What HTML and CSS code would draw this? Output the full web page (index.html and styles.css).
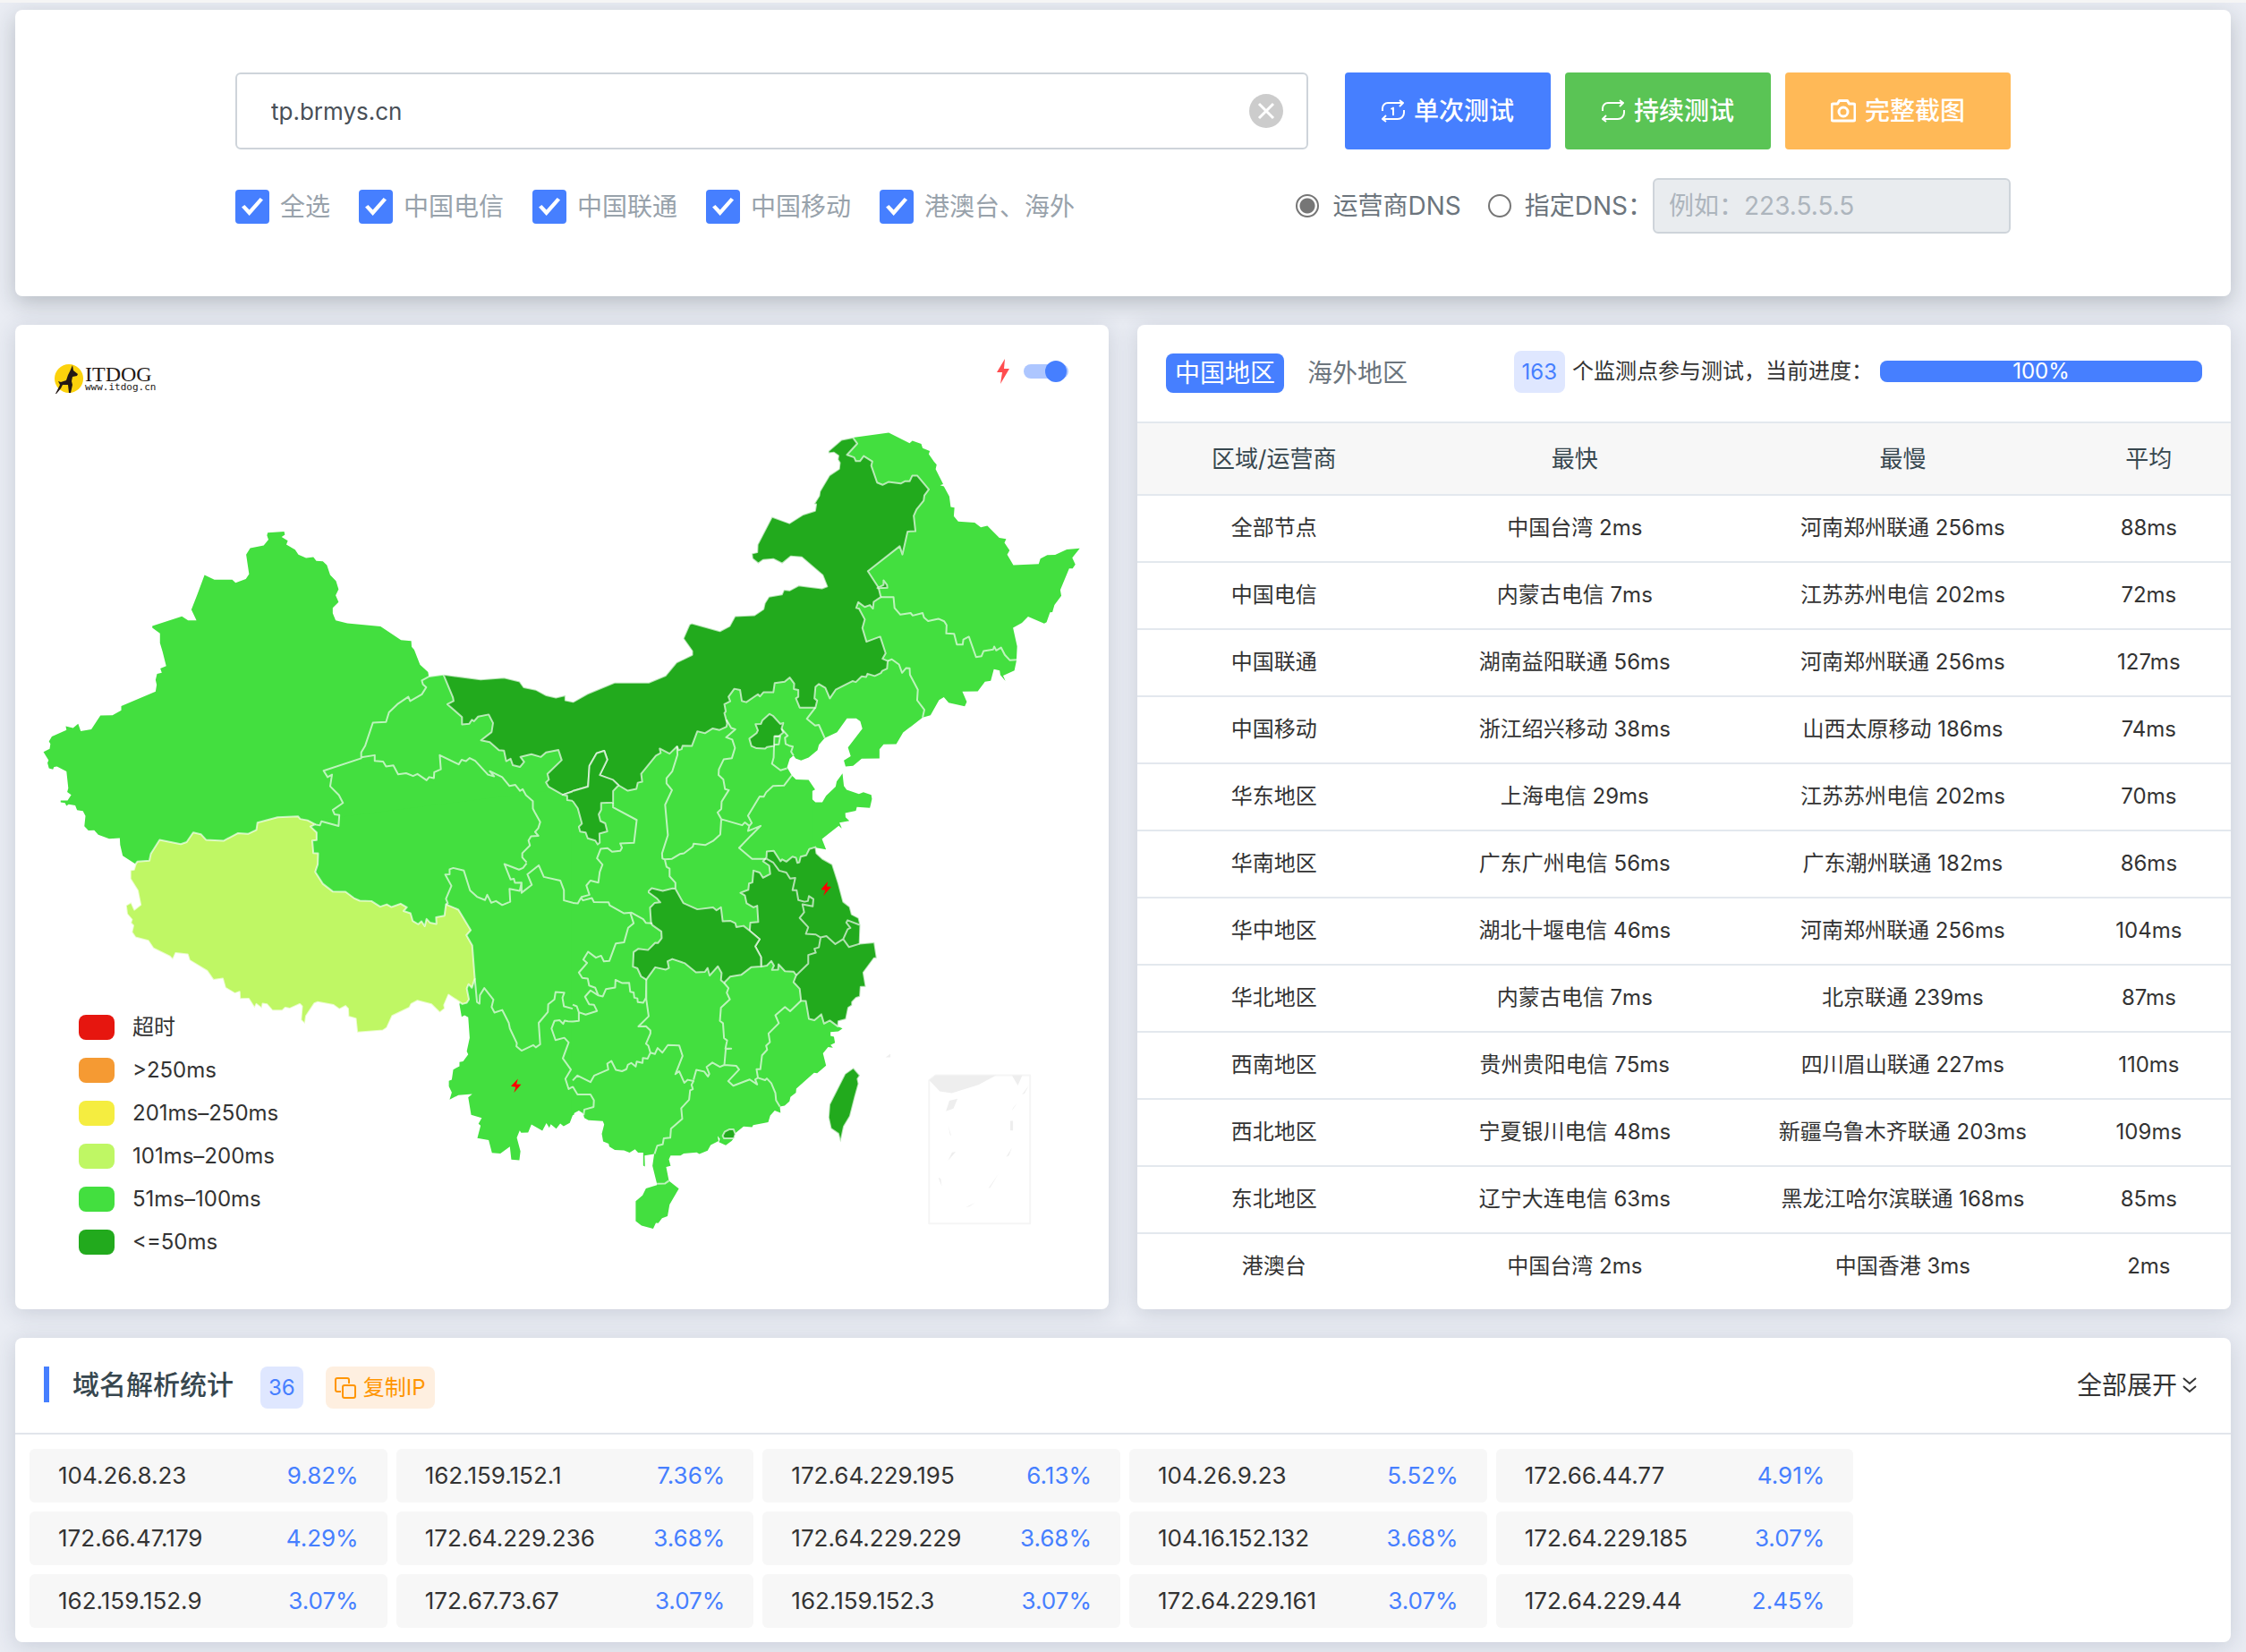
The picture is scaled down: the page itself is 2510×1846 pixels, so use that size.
FILE: index.html
```html
<!DOCTYPE html>
<html lang="zh-CN">
<head>
<meta charset="utf-8">
<title>ITDOG</title>
<meta name="viewport" content="width=device-width, initial-scale=1">
<link rel="stylesheet" href="styles.css">
</head>
<body>
<main class="page">

<form class="card search">
  <div class="search-inner">
    <div class="search-row">
      <div class="host-box">
        <input class="host" type="text" value="tp.brmys.cn" aria-label="域名">
        <button class="clear" type="button" aria-label="清空"><svg viewBox="0 0 38 38" aria-hidden="true"><circle cx="19" cy="19" r="19"/><path d="M11 11l16 16M27 11L11 27"/></svg></button>
      </div>
      <div class="actions">
        <button class="btn btn-blue" type="button"><svg class="ico" viewBox="0 0 26 26" aria-hidden="true"><path d="M1 13v-3a6 6 0 0 1 6-6h17M20 1l4 3-4 4M25 12v3a7 7 0 0 1-7 7H2M5 18l-4 4 4 3M10.500 11l2.500-1.500v8.500"/></svg>单次测试</button>
        <button class="btn btn-green" type="button"><svg class="ico" viewBox="0 0 26 26" aria-hidden="true"><path d="M1 13v-3a6 6 0 0 1 6-6h17M20 1l4 3-4 4M25 12v3a7 7 0 0 1-7 7H2M5 18l-4 4 4 3"/></svg>持续测试</button>
        <button class="btn btn-orange" type="button"><svg class="ico ico-cam" viewBox="0 0 28 26" aria-hidden="true"><path d="M3 5h4.500l2-3.500h9l2 3.500H25a2 2 0 0 1 2 2v15a2 2 0 0 1-2 2H3a2 2 0 0 1-2-2V7a2 2 0 0 1 2-2z"/><circle cx="14" cy="14" r="5"/></svg>完整截图</button>
      </div>
    </div>
    <div class="filter-row">
      <div class="checks">
        <label class="check"><input type="checkbox" checked>全选</label>
        <label class="check"><input type="checkbox" checked>中国电信</label>
        <label class="check"><input type="checkbox" checked>中国联通</label>
        <label class="check"><input type="checkbox" checked>中国移动</label>
        <label class="check"><input type="checkbox" checked>港澳台、海外</label>
      </div>
      <div class="dns">
        <label class="radio"><input type="radio" name="dns" checked>运营商DNS</label>
        <label class="radio"><input type="radio" name="dns">指定DNS：</label>
        <input class="dns-input" type="text" placeholder="例如：223.5.5.5" aria-label="指定DNS" disabled>
      </div>
    </div>
  </div>
</form>

<div class="columns">
  <section class="card map-card">
    <svg class="map" viewBox="17 363 1222 1100" role="img" aria-label="中国地区延迟地图">
      <!-- land base -->
      <g class="g51">
        <g transform="translate(0 350) scale(.408163 .395408)">
          <path d="M733,620 778,617 780,626 771,632 788,643 784,654 808,668 817,682 838,692 858,689 866,700 884,701 895,712 904,740 920,757 927,780 919,797 927,816 911,833 911,848 919,868 951,876 1042,885 1098,924 1126,926 1127,943 1134,951 1150,993 1172,1014 1174,1027 1214,1021 1300,1100 1450,1100 1570,1200 1570,1570 372,1557 336,1533 329,1502 328,1483 299,1485 269,1474 258,1461 242,1462 231,1450 234,1421 227,1407 211,1404 206,1391 188,1388 182,1392 178,1384 166,1382 166,1377 185,1377 195,1361 184,1353 187,1342 182,1295 156,1281 148,1282 145,1289 134,1286 130,1271 133,1263 119,1240 136,1231 138,1217 134,1210 142,1196 182,1178 180,1167 200,1172 214,1160 221,1181 250,1176 275,1137 308,1136 332,1122 332,1110 426,1069 429,1050 426,1036 430,1019 443,1016 439,1004 455,997 445,956 438,932 438,905 417,889 417,884 498,857 515,868 538,868 524,838 541,793 560,740 587,753 636,753 645,762 673,751 682,737 674,682 685,664 722,656 735,640 731,628z"/>
        </g>
        <g transform="translate(640 440) scale(.382653 .357143)">
          <path d="M818,137 923,122 984,155 992,147 1018,157 1022,170 1043,179 1040,189 1055,212 1063,222 1060,236 1082,283 1073,286 1084,290 1100,321 1104,354 1115,356 1113,383 1126,400 1174,403 1192,418 1211,413 1246,451 1266,454 1261,466 1276,490 1269,503 1287,536 1361,533 1366,516 1386,505 1409,504 1443,487 1481,484 1459,513 1468,534 1460,547 1450,547 1424,614 1427,632 1407,661 1401,683 1394,684 1384,715 1377,719 1330,697 1312,717 1286,732 1298,790 1296,835 1290,866 1257,882 1264,899 1249,880 1247,866 1230,862 1221,898 1204,901 1183,931 1138,932 1151,964 1145,978 1098,967 1084,949 1070,958 1045,1006 1022,1013 965,1060 945,1096 908,1097 896,1112 896,1141 844,1142 819,1164 797,1166 792,1147 812,1134 804,1107 846,1048 840,1025 828,1016 801,1016 772,1059 736,1077 719,1098 715,1115 689,1138 667,1147 651,1141 645,1132 634,1142 626,1169 640,1194 652,1207 689,1208 708,1238 693,1247 693,1262 709,1278 729,1278 740,1258 768,1229 771,1213 788,1188 792,1227 800,1239 836,1252 849,1247 872,1255 874,1268 868,1296 830,1293 827,1305 796,1312 797,1325 808,1336 779,1342 786,1360 777,1352 728,1393 740,1426 710,1420 700,1450 700,1568 -4,1568 -4,1200 300,1050 430,900 700,800 850,500 800,230 795,170z"/>
        </g>
        <g transform="translate(0 880) scale(.408163 .369898)">
          <path d="M850,100 1572,0 1572,988 1568,990 1560,1013 1543,1023 1534,1015 1523,1031 1508,1017 1504,1028 1496,1014 1485,1037 1455,1018 1446,1042 1427,1043 1423,1036 1415,1058 1425,1099 1422,1126 1400,1124 1396,1085 1370,1106 1347,1104 1338,1065 1307,1059 1316,1021 1310,1016 1319,998 1290,989 1282,936 1293,926 1255,929 1231,943 1237,921 1229,903 1229,886 1237,883 1241,852 1258,842 1258,829 1268,827 1282,806 1278,797 1286,756 1282,694 1272,688 1264,693 1258,655 1262,632 1240,600 850,400z"/>
        </g>
        <g transform="translate(640 880) scale(.382653 .369898)">
          <path d="M-4,0 700,0 700,400 800,520 760,600 750,702 775,722 788,728 776,737 753,739 753,750 763,753 766,771 753,778 760,786 746,784 731,803 740,840 714,863 705,862 653,910 652,922 636,935 633,948 619,961 605,964 607,983 590,976 577,991 571,1011 527,1020 524,1026 499,1024 470,1048 472,1058 464,1068 447,1081 427,1071 430,1062 423,1052 426,1068 403,1080 394,1097 370,1107 362,1102 324,1106 315,1112 286,1112 281,1123 286,1143 273,1146 281,1188 310,1212 283,1260 277,1295 261,1301 250,1316 243,1315 235,1333 201,1323 184,1310 184,1250 204,1232 214,1211 246,1201 246,1197 233,1143 238,1107 210,1112 211,1145 206,1142 206,1103 191,1103 182,1093 166,1103 150,1096 123,1095 107,1085 105,1076 89,1069 85,1046 92,1018 88,1008 46,1005 34,998 30,984 18,976 0,986 -4,988z"/>
        </g>
      </g>
      <!-- provinces in the other latency bands -->
      <g class="bordered">
        <g transform="translate(0 880) scale(.408163 .369898)">
          <path class="g101" d="M372,230 376,224 409,221 413,200 437,158 495,171 511,165 529,136 550,141 564,158 612,161 651,138 679,140 702,128 705,106 760,90 816,87 822,95 842,99 863,111 850,118 867,136 867,159 855,160 858,198 871,199 870,232 863,255 884,291 911,314 946,315 969,334 985,342 1017,343 1041,360 1059,353 1072,361 1097,351 1114,362 1105,373 1124,380 1130,403 1145,413 1154,404 1163,419 1168,397 1177,408 1195,412 1194,392 1217,387 1221,353 1255,369 1289,431 1277,446 1293,477 1300,577 1292,605 1283,594 1278,607 1284,640 1278,650 1266,654 1258,648 1228,626 1216,657 1218,668 1204,680 1181,655 1143,644 1126,654 1121,665 1074,690 1059,726 1048,734 978,740 974,698 954,692 953,668 946,660 929,670 913,657 870,648 861,652 838,690 835,714 824,702 827,661 821,654 793,668 781,665 773,674 746,674 731,655 719,653 717,667 702,654 697,666 681,638 657,639 656,617 643,622 617,605 610,577 584,581 567,554 519,522 514,504 481,500 473,520 465,510 420,486 406,463 371,453 361,437 365,417 358,409 361,399 348,382 345,356 359,347 368,369 385,354 377,311 357,276 357,250 367,248z"/>
        </g>
        <g class="g50" transform="translate(0 350) scale(.408163 .395408)">
          <path d="M1569,1098 1548,1094 1548,1080 1522,1086 1496,1080 1467,1064 1434,1057 1423,1041 1380,1030 1316,1035 1214,1021 1240,1085 1242,1096 1225,1105 1265,1141 1265,1162 1285,1160 1292,1149 1298,1153 1309,1140 1338,1134 1350,1158 1346,1184 1317,1207 1341,1212 1366,1235 1380,1236 1386,1266 1398,1259 1404,1277 1424,1282 1435,1268 1425,1254 1455,1246 1481,1254 1495,1241 1529,1234 1538,1263 1499,1302 1503,1318 1495,1326 1502,1338 1541,1361 1569,1351"/>
          <path d="M1569,1351 1541,1361 1553,1364 1553,1376 1569,1378"/>
        </g>
        <g class="g50" transform="translate(640 440) scale(.382653 .357143)">
          <path d="M0,965 43,939 122,904 222,904 271,882 303,841 349,817 349,805 323,766 341,722 348,718 430,743 458,727 474,696 531,693 557,674 561,655 573,635 611,628 617,613 634,615 660,600 690,604 728,609 743,603 730,568 669,512 637,509 612,531 586,517 556,520 542,531 525,516 523,500 539,496 540,472 582,385 633,405 673,378 708,366 711,346 705,345 720,319 722,305 750,255 778,235 780,216 774,206 776,194 763,184 747,186 747,179 785,144 818,137 831,156 801,191 822,199 827,211 839,211 850,195 875,212 872,225 889,278 905,285 922,276 958,281 970,274 984,274 992,256 1006,256 1040,299 1027,318 1025,334 1004,362 996,382 1001,430 978,431 963,503 955,477 862,555 893,606 900,636 879,651 877,672 868,661 853,667 834,652 828,670 836,672 853,706 846,733 858,776 898,760 914,812 905,829 920,836 918,860 904,867 900,874 882,883 861,876 857,886 844,884 827,902 817,899 768,926 751,953 738,920 719,908 709,917 706,953 714,960 709,982 663,982 652,953 659,948 659,927 646,924 647,907 634,888 619,901 590,905 586,934 557,934 547,947 541,940 507,965 494,961 489,927 472,923 455,948 460,962 443,971 447,994 443,999 451,1032 449,1042 429,1052 409,1047 386,1062 364,1056 348,1102 321,1101 318,1112 309,1115 305,1103 283,1126 254,1110 257,1124 243,1132 200,1189 203,1214 190,1217 186,1236 161,1242 134,1225 118,1210 79,1193 101,1145 92,1117 70,1125 49,1164 45,1229 0,1243"/>
          <path d="M0,1243 45,1229 49,1164 70,1125 92,1117 101,1145 79,1193 118,1208 134,1225 118,1243 118,1279 83,1280 83,1302 76,1316 81,1337 95,1344 101,1369 78,1376 79,1404 73,1410 66,1398 44,1391 38,1373 22,1370 18,1355 27,1345 15,1297 0,1274"/>
          <path d="M516,1079 537,1062 541,1053 534,1034 550,1033 554,1022 575,1002 585,1008 606,1033 615,1030 610,1048 615,1060 602,1072 589,1072 588,1102 568,1105 562,1110 537,1109 522,1102z"/>
          <path d="M890,608 908,598 908,584 918,598 919,607z"/>
        </g>
        <g class="g50" transform="translate(640 880) scale(.382653 .369898)">
          <path d="M567,193 587,191 607,223 612,217 624,224 642,209 652,212 656,228 662,226 666,209 682,205 691,186 709,180 712,199 729,215 758,232 776,290 790,345 809,360 815,383 835,394 840,415 838,472 881,468 888,516 880,516 849,559 856,602 841,602 839,632 828,635 816,648 816,658 805,665 798,700 776,706 775,722 751,704 734,713 726,685 706,703 690,699 681,645 667,644 663,608 645,588 653,567 645,556 620,555 601,534 600,550 582,551 588,538 580,524 567,538 551,541 550,512 533,480 546,458 517,433 519,408 542,406 539,357 528,362 508,350 503,326 490,318 513,309 515,290 525,287 528,251 546,257 556,273 577,261 574,236 556,223 566,212z"/>
          <path d="M222,313 231,304 263,312 292,305 300,306 323,349 364,368 410,362 420,371 433,362 438,404 461,403 475,410 478,422 499,418 516,432 546,458 533,480 550,512 550,541 521,543 492,566 460,571 442,590 433,582 435,560 424,540 400,568 394,545 386,557 360,558 328,531 291,518 277,525 281,545 272,550 241,543 215,580 200,571 189,546 176,541 178,497 192,487 220,491 241,469 249,470 260,455 259,435 233,416 229,410 226,363 239,349 256,347 247,336 222,317z"/>
          <path d="M438,1052 444,1040 457,1033 470,1033 475,1047 471,1060 442,1060z"/>
          <path d="M820,847 839,870 832,880 835,895 824,936 810,993 792,1024 782,1072 776,1046 754,1030 747,997 750,957 795,865z"/>
        </g>
      </g>
      <!-- province borders -->
      <g class="borders">
        <path transform="translate(0 350) scale(.408163 .395408)" d="M1214,1021 1174,1027 1155,1038 1158,1049 1167,1057 1155,1077 1123,1096 1118,1084 1088,1105 1065,1128 1057,1155 1021,1157 1000,1222 989,1241 989,1258 886,1293 897,1311 909,1304 904,1337 928,1362 939,1384 911,1404 916,1416 929,1418 927,1449 880,1436 876,1447 863,1445M989,1255 1026,1249 1026,1265 1049,1267 1057,1281 1077,1278 1090,1303 1112,1300 1131,1308 1143,1302 1168,1320 1175,1311 1188,1314 1189,1297 1207,1289 1204,1249 1256,1275 1264,1262 1276,1266 1286,1257 1301,1265 1336,1304 1353,1309 1341,1294 1375,1311 1395,1336 1411,1333 1424,1350 1431,1345 1440,1362 1459,1379 1459,1400 1464,1410 1479,1438 1474,1455 1465,1466 1474,1477 1454,1478 1447,1490 1451,1504 1430,1526 1430,1538 1442,1552"/>
        <path transform="translate(0 880) scale(.408163 .369898)" d="M1442,229 1432,243 1421,248 1381,231 1398,278 1407,276 1410,288 1428,287 1423,312 1395,306 1397,345 1375,355 1358,343 1345,348 1334,324 1328,340 1306,330 1287,311 1270,251 1241,243 1231,247 1231,262 1219,263 1236,297 1221,336 1226,350 1221,353M1428,287 1428,318 1456,294 1444,262 1475,235 1489,270 1534,281 1544,310 1544,341 1568,348M1300,577 1306,648 1313,653 1314,627 1326,606 1351,641 1346,663 1354,680 1375,672 1393,711 1396,728 1415,772 1414,782 1428,795 1460,778 1467,785 1479,776 1475,711 1500,678 1501,655 1518,640 1521,618 1545,620 1540,635 1544,661 1568,668M1568,707 1555,706 1546,704 1542,714 1532,703 1518,705 1510,728 1521,763 1545,756 1557,770 1541,818 1563,852 1548,880 1557,911 1568,904"/>
        <path transform="translate(640 440) scale(.382653 .357143)" d="M305,1103 306,1130 291,1181 274,1203 274,1219 290,1240 270,1286 278,1381 261,1438 262,1454 269,1457 274,1480 283,1486 283,1510 300,1530 300,1548M269,1457 290,1455 313,1440 325,1438 351,1417 353,1408 387,1412 410,1399 431,1379 434,1331 423,1310 434,1299 435,1276 456,1240 445,1237 440,1207 426,1193 427,1175 441,1144 465,1140 474,1108 466,1082 448,1075 475,1050 463,1046 449,1020M434,1331 495,1350 503,1341 516,1352 523,1343 512,1320 546,1260 558,1261 565,1247 585,1227 617,1226 640,1194M516,1352 512,1368 549,1352 520,1383 486,1421 524,1455 565,1455M588,1102 587,1138 582,1158 607,1178 626,1172M610,1048 628,1070 620,1076 622,1096 632,1101 643,1104 638,1120 645,1132M589,1072 606,1072 602,1097 588,1098M709,982 684,1017 708,1038 719,1036 736,1077M920,836 932,831 953,847 962,873 974,858 984,859 985,879 1008,926 1006,959 1027,989 1022,1013M900,636 937,636 940,670 957,691 987,686 993,694 1022,686 1026,700 1038,711 1068,704 1085,712 1092,724 1091,750 1114,751 1122,785 1139,785 1141,769 1157,760 1178,824 1194,821 1200,805 1228,800 1231,791 1237,803 1251,794 1262,817 1277,834 1297,832"/>
        <path transform="translate(640 880) scale(.382653 .369898)" d="M0,349 15,350 24,333 30,341 56,334 62,346 105,347 108,356 150,380 172,378 206,398 214,409 233,410M24,331 49,324 40,296 52,281 75,287 79,255 87,233 71,214 82,185 102,183 115,194 139,191 144,182 139,169 179,167 187,98 118,60 118,46M168,378 178,410 162,424 150,468 126,471 107,524 91,525 83,508 68,514 45,496 31,520 42,530 18,559 28,575 44,577 48,598 66,605 75,628 88,631 97,609 124,604 125,581 145,591 165,590 168,617 178,619 180,635 189,637 190,648 206,650 214,635 215,580M75,628 52,613 36,632 48,655 62,656 71,675 38,686 18,679 18,705 0,707M18,679 12,661 0,656M0,885 14,870 52,890 63,870 104,852 101,834 113,826 126,853 144,857 157,851 161,838 171,832 184,843 187,828 204,832 205,817 219,819 227,801 240,805 248,787 262,801 278,778 311,779 321,811 300,866 311,857 326,892 336,883 353,887 347,898 351,911 343,915 340,943 317,969 320,1001 287,1031 285,1058 266,1060 263,1078 247,1082 239,1107M0,903 14,927 52,927 62,945 61,965 34,973 32,990M246,1197 270,1196 281,1188M215,580 215,640 222,691 192,722 214,721 227,734 227,743 214,774 221,780 227,801M442,590 455,606 450,620 459,640 433,665 430,705 439,712 442,757 451,764 446,789 463,789 447,790 443,838M353,883 361,853 384,858 395,873 399,865 391,844 408,831 430,844 443,838 478,841 486,852 454,887 469,901 517,882 539,897 533,882 541,877M667,644 635,676 620,663 592,688 602,712 572,743 576,769 565,780 568,792 553,809 548,851 537,851 541,877 562,884 567,879 580,893 592,923 594,945 605,964M566,215 586,227 603,251 624,257 635,275 650,273 642,310 654,310 659,340 677,345 687,343 690,328 703,337 701,359 671,353 676,377 663,394 688,422 681,442 710,444 724,453 719,483 706,487 710,499 688,506 688,532 653,567M724,453 741,449 767,473 790,458M838,415 803,401 799,408 811,424 803,428 790,458 807,482 838,472"/>
      </g>
      <!-- South China Sea inset -->
      <g class="inset" transform="translate(640 880) scale(.382653 .369898)">
        <path class="inset-frame" d="M1041,885 1060,869H1336V1317H1041z"/>
        <path d="M1041,884 1060,870H1236L1185,898 1107,923 1072,918zM1283,870H1313L1300,900zM1100,946 1124,940 1112,970 1090,978zM1332,900 1320,924 1312,928zM1299,952 1282,977 1286,968zM1278,1007H1286V1036H1278zM1097,1022 1106,1054 1102,1048zM1119,1100 1096,1127 1108,1102zM1283,1088 1274,1112 1266,1116zM1068,1178 1075,1182 1078,1205zM1243,1168 1220,1208 1214,1211zM1176,1254 1158,1266 1148,1268zM928,804V815H914z"/>
      </g>
      <g class="bolt">
        <path transform="translate(640 880) scale(.382653 .369898)" d="M745,284 725,308 738,310 732,327 755,300 742,299z"/>
        <path transform="translate(0 880) scale(.408163 .369898)" d="M1418,880 1399,902 1412,905 1407,922 1427,897 1414,896z"/>
      </g>
    </svg>
    <div class="map-overlay">
      <header class="map-head">
        <a class="logo" href="#">
          <svg class="dog" viewBox="0 0 34 36" aria-hidden="true"><circle cx="17" cy="17" r="16"/><path d="M19 7l2-5 1 6 5 4-1 2-5 1-1 5 1 4-2 9h-2l-1-9-6 0-2 4-5 6H2l5-10-2-4 3 1 6-2 2-6z"/></svg>
          <span class="logo-text"><b>ITDOG</b><small>www.itdog.cn</small></span>
        </a>
        <label class="bolt-switch">
          <svg viewBox="0 0 14 28" aria-hidden="true"><path d="M9 0L0 15h6L4 28 14 11H8z"/></svg>
          <input type="checkbox" role="switch" aria-label="闪电标记" checked>
        </label>
      </header>
      <ul class="legend">
        <li><i class="sw sw-timeout"></i>超时</li>
        <li><i class="sw sw-250"></i>&gt;250ms</li>
        <li><i class="sw sw-201"></i>201ms–250ms</li>
        <li><i class="sw sw-101"></i>101ms–200ms</li>
        <li><i class="sw sw-51"></i>51ms–100ms</li>
        <li><i class="sw sw-50"></i>&lt;=50ms</li>
      </ul>
    </div>
  </section>

  <section class="card stats-card">
    <header class="stats-head">
      <div class="tabs">
        <button class="tab active" type="button">中国地区</button>
        <button class="tab" type="button">海外地区</button>
      </div>
      <div class="progress-line">
        <span class="badge">163</span>
        <span>个监测点参与测试，当前进度：</span>
        <div class="bar" role="progressbar" aria-label="当前进度" aria-valuenow="100" aria-valuemin="0" aria-valuemax="100"><div class="bar-fill" style="width:100%">100%</div></div>
      </div>
    </header>
    <table class="stats">
      <colgroup><col class="c-area"><col class="c-node"><col class="c-node"><col class="c-avg"></colgroup>
      <thead><tr><th>区域/运营商</th><th>最快</th><th>最慢</th><th>平均</th></tr></thead>
      <tbody>
        <tr><td>全部节点</td><td>中国台湾 2ms</td><td>河南郑州联通 256ms</td><td>88ms</td></tr>
        <tr><td>中国电信</td><td>内蒙古电信 7ms</td><td>江苏苏州电信 202ms</td><td>72ms</td></tr>
        <tr><td>中国联通</td><td>湖南益阳联通 56ms</td><td>河南郑州联通 256ms</td><td>127ms</td></tr>
        <tr><td>中国移动</td><td>浙江绍兴移动 38ms</td><td>山西太原移动 186ms</td><td>74ms</td></tr>
        <tr><td>华东地区</td><td>上海电信 29ms</td><td>江苏苏州电信 202ms</td><td>70ms</td></tr>
        <tr><td>华南地区</td><td>广东广州电信 56ms</td><td>广东潮州联通 182ms</td><td>86ms</td></tr>
        <tr><td>华中地区</td><td>湖北十堰电信 46ms</td><td>河南郑州联通 256ms</td><td>104ms</td></tr>
        <tr><td>华北地区</td><td>内蒙古电信 7ms</td><td>北京联通 239ms</td><td>87ms</td></tr>
        <tr><td>西南地区</td><td>贵州贵阳电信 75ms</td><td>四川眉山联通 227ms</td><td>110ms</td></tr>
        <tr><td>西北地区</td><td>宁夏银川电信 48ms</td><td>新疆乌鲁木齐联通 203ms</td><td>109ms</td></tr>
        <tr><td>东北地区</td><td>辽宁大连电信 63ms</td><td>黑龙江哈尔滨联通 168ms</td><td>85ms</td></tr>
        <tr><td>港澳台</td><td>中国台湾 2ms</td><td>中国香港 3ms</td><td>2ms</td></tr>
      </tbody>
    </table>
  </section>
</div>

<section class="card ip-card">
  <header class="ip-head">
    <h2>域名解析统计</h2>
    <span class="badge">36</span>
    <button class="copy" type="button"><svg viewBox="0 0 24 24" aria-hidden="true"><path d="M7 16H3a2 2 0 0 1-2-2V3a2 2 0 0 1 2-2h11a2 2 0 0 1 2 2v4"/><rect x="9" y="9" width="14" height="14" rx="2"/></svg>复制IP</button>
    <a class="expand" href="#">全部展开<svg viewBox="0 0 16 18" aria-hidden="true"><path d="M1 1l7 6 7-6M1 10l7 6 7-6"/></svg></a>
  </header>
  <ul class="ips">
    <li><span>104.26.8.23</span><em>9.82%</em></li>
    <li><span>162.159.152.1</span><em>7.36%</em></li>
    <li><span>172.64.229.195</span><em>6.13%</em></li>
    <li><span>104.26.9.23</span><em>5.52%</em></li>
    <li><span>172.66.44.77</span><em>4.91%</em></li>
    <li><span>172.66.47.179</span><em>4.29%</em></li>
    <li><span>172.64.229.236</span><em>3.68%</em></li>
    <li><span>172.64.229.229</span><em>3.68%</em></li>
    <li><span>104.16.152.132</span><em>3.68%</em></li>
    <li><span>172.64.229.185</span><em>3.07%</em></li>
    <li><span>162.159.152.9</span><em>3.07%</em></li>
    <li><span>172.67.73.67</span><em>3.07%</em></li>
    <li><span>162.159.152.3</span><em>3.07%</em></li>
    <li><span>172.64.229.161</span><em>3.07%</em></li>
    <li><span>172.64.229.44</span><em>2.45%</em></li>
  </ul>
</section>

</main>
</body>
</html>
```
FILE: styles.css
```css
* { box-sizing: border-box; }

body {
  margin: 0;
  background: #e9ecf3;
  border-top: 3px solid #f5f5f5;
  color: #333;
  font-family: Inter, "Noto Sans CJK SC", sans-serif;
  font-size: 24px;
  line-height: 32px;
}

button, input { font: inherit; color: inherit; }
button { border: 0; padding: 0; background: none; cursor: pointer; }
a { color: inherit; text-decoration: none; }
ul { list-style: none; margin: 0; padding: 0; }
svg { display: block; }

.page {
  display: flex;
  flex-direction: column;
  gap: 32px;
  padding: 8px 17px 11px;
}

.card {
  background: #fff;
  border-radius: 8px;
  box-shadow: 0 4px 24px rgba(40, 50, 80, .16);
}

/* search panel */
.search {
  padding: 70px 32px;
  box-shadow: 0 8px 24px rgba(30, 40, 50, .24);
}
.search-inner {
  max-width: 1984px;
  margin: 0 auto;
  display: flex;
  flex-direction: column;
  gap: 32px;
}
.search-row { display: flex; gap: 41px; }
.host-box {
  flex: 1;
  display: flex;
  align-items: center;
  height: 86px;
  padding: 0 26px 0 38px;
  border: 2px solid #ced4da;
  border-radius: 6px;
}
.host {
  flex: 1;
  min-width: 0;
  height: 80px;
  padding: 0;
  border: 0;
  outline: 0;
  background: none;
  color: #495057;
  font-size: 26px;
}
.clear svg { width: 38px; height: 38px; fill: #ccc; }
.clear path { stroke: #fff; stroke-width: 3; }

.actions { display: flex; gap: 16px; }
.btn {
  display: flex;
  align-items: center;
  gap: 10px;
  height: 86px;
  padding: 0 41px;
  border-radius: 4px;
  color: #fff;
  font-size: 28px;
  font-weight: 500;
}
.btn-blue { background: #467fff; }
.btn-green { background: #5ac455; }
.btn-orange { background: #ffb957; padding: 0 51px; }
.ico { width: 26px; height: 26px; fill: none; stroke: #fff; stroke-width: 2; stroke-linejoin: round; }
.ico-cam { width: 28px; stroke-width: 3; }

.filter-row {
  display: flex;
  justify-content: space-between;
  align-items: center;
  height: 62px;
  font-size: 28px;
}
.checks { display: flex; gap: 32px; padding-top: 2px; color: #98a2ab; }
.check { display: flex; align-items: center; gap: 12px; }
.check input {
  appearance: none;
  width: 38px;
  height: 38px;
  margin: 0;
  border-radius: 4px;
  background: #467fff;
  display: grid;
  place-items: center;
}
.check input::before {
  content: "";
  width: 24px;
  height: 20px;
  background: #fff;
  clip-path: polygon(0 52%, 14% 40%, 36% 68%, 86% 0, 100% 12%, 36% 100%);
}
.dns { display: flex; align-items: center; color: #6c757d; }
.radio { display: flex; align-items: center; gap: 15px; margin-right: 30px; }
.radio + .radio { margin-right: 0; }
.radio input {
  appearance: none;
  width: 26px;
  height: 26px;
  margin: 0;
  border: 2px solid #767676;
  border-radius: 50%;
  background: #fff;
}
.radio input:checked { background: radial-gradient(circle, #767676 0 8px, #fff 9px); }
.dns-input {
  width: 400px;
  height: 62px;
  padding: 0 16px;
  border: 2px solid #ced4da;
  border-radius: 6px;
  background: #e9ecef;
}
.dns-input::placeholder { color: #adb5bd; opacity: 1; }

/* map and statistics columns */
.columns {
  display: grid;
  grid-template-columns: 1fr 1fr;
  gap: 32px;
}
.map-card { display: grid; }
.map, .map-overlay { grid-area: 1 / 1; }
.map { width: 100%; height: auto; }
.map-overlay {
  display: flex;
  flex-direction: column;
  justify-content: space-between;
  padding: 37px 45px 59px 43px;
}
.map path { vector-effect: non-scaling-stroke; stroke-linejoin: round; }
.g51 { fill: #43df3f; }
.g101 { fill: #bff764; }
.g50 { fill: #22aa1d; }
.bordered, .borders { stroke: rgba(255, 255, 255, .65); stroke-width: 2; }
.borders { fill: none; }
.inset { fill: #eee; }
.inset-frame { fill: none; stroke: #f5f5f5; stroke-width: 2; }
.bolt { fill: #f00; }

.map-head { display: flex; justify-content: space-between; align-items: flex-start; }
.logo { display: flex; align-items: center; gap: 1px; padding-top: 6px; color: #231815; }
.dog { width: 34px; height: 36px; fill: #231815; }
.dog circle { fill: #fcd20c; }
.logo-text { display: flex; flex-direction: column; }
.logo-text b { font: 24px/18px "Liberation Serif", serif; }
.logo-text small { font: 11px/12px "DejaVu Sans Mono", monospace; }
.bolt-switch { display: flex; align-items: center; gap: 16px; height: 30px; }
.bolt-switch svg { width: 14px; height: 28px; fill: #ff4d4f; }
.bolt-switch input {
  appearance: none;
  width: 50px;
  height: 16px;
  margin: 0;
  border-radius: 8px;
  background: #adc6ff;
  display: flex;
  align-items: center;
  justify-content: flex-end;
  padding-right: 2px;
}
.bolt-switch input::before {
  content: "";
  flex: none;
  width: 24px;
  height: 24px;
  border-radius: 50%;
  background: #467fff;
}

.legend { display: flex; flex-direction: column; gap: 16px; padding-left: 28px; }
.legend li { display: flex; align-items: center; gap: 20px; }
.sw { width: 40px; height: 28px; border-radius: 8px; }
.sw-timeout { background: #e6160f; }
.sw-250 { background: #f59a33; }
.sw-201 { background: #f5ed40; }
.sw-101 { background: #bff764; }
.sw-51 { background: #43df3f; }
.sw-50 { background: #22aa1d; }

.stats-card { overflow: hidden; }
.stats-head {
  display: flex;
  justify-content: space-between;
  align-items: flex-start;
  height: 108px;
  padding: 29px 32px 0;
}
.tabs { display: flex; gap: 16px; padding-top: 3px; }
.tab { height: 44px; padding: 0 10px; border-radius: 8px; color: #6c757d; font-size: 28px; }
.tab.active { background: #467fff; color: #fff; }
.progress-line { display: flex; align-items: flex-start; line-height: 46px; }
.badge {
  padding: 0 9px;
  height: 47px;
  border-radius: 8px;
  background: #dfe7ff;
  color: #467fff;
  line-height: 47px;
}
.progress-line .badge { margin-right: 8px; }
.bar { width: 360px; height: 24px; margin: 11px 0 0 8px; border-radius: 8px; background: #e9ecef; }
.bar-fill { height: 24px; border-radius: 8px; background: #467fff; color: #fff; text-align: center; line-height: 24px; }

.stats { width: 100%; table-layout: fixed; border-collapse: collapse; text-align: center; }
.c-area { width: 25%; }
.c-node { width: 30%; }
.c-avg { width: 15%; }
.stats th, .stats td { height: 75px; padding: 0; border-top: 2px solid #e3e8ee; }
.stats td { padding-bottom: 2px; }
.stats th { height: 81px; background: #f7f7f7; color: #37474f; font-size: 26px; font-weight: 400; }

/* resolved addresses */
.ip-head {
  display: flex;
  align-items: flex-start;
  height: 108px;
  padding: 32px 38px 0 32px;
  border-bottom: 2px solid #e1e5eb;
}
.ip-head h2 {
  margin: 0 30px 0 0;
  padding-left: 26px;
  border-left: 6px solid #467fff;
  color: #37474f;
  font-size: 30px;
  font-weight: 500;
  line-height: 40px;
}
.copy {
  display: flex;
  align-items: center;
  gap: 8px;
  height: 47px;
  margin-left: 25px;
  padding: 0 10px;
  border-radius: 8px;
  background: #feefe0;
  color: #ff9500;
}
.copy svg { width: 24px; height: 24px; fill: none; stroke: #ff9500; stroke-width: 2; }
.expand { display: flex; align-items: center; gap: 6px; margin-left: auto; font-size: 28px; line-height: 42px; }
.expand svg { width: 16px; height: 18px; fill: none; stroke: #333; stroke-width: 2; }

/* six tracks, the last one stays free */
.ips {
  display: grid;
  grid-template-columns: repeat(6, 1fr);
  gap: 10px;
  padding: 16px 12px 16px 16px;
}
.ips li {
  display: flex;
  justify-content: space-between;
  align-items: center;
  height: 60px;
  padding: 0 32px;
  border-radius: 6px;
  background: #f7f7f7;
  font-size: 26px;
}
.ips li:nth-child(5n + 1) { grid-column-start: 1; }
.ips em { color: #467fff; font-style: normal; }
```
